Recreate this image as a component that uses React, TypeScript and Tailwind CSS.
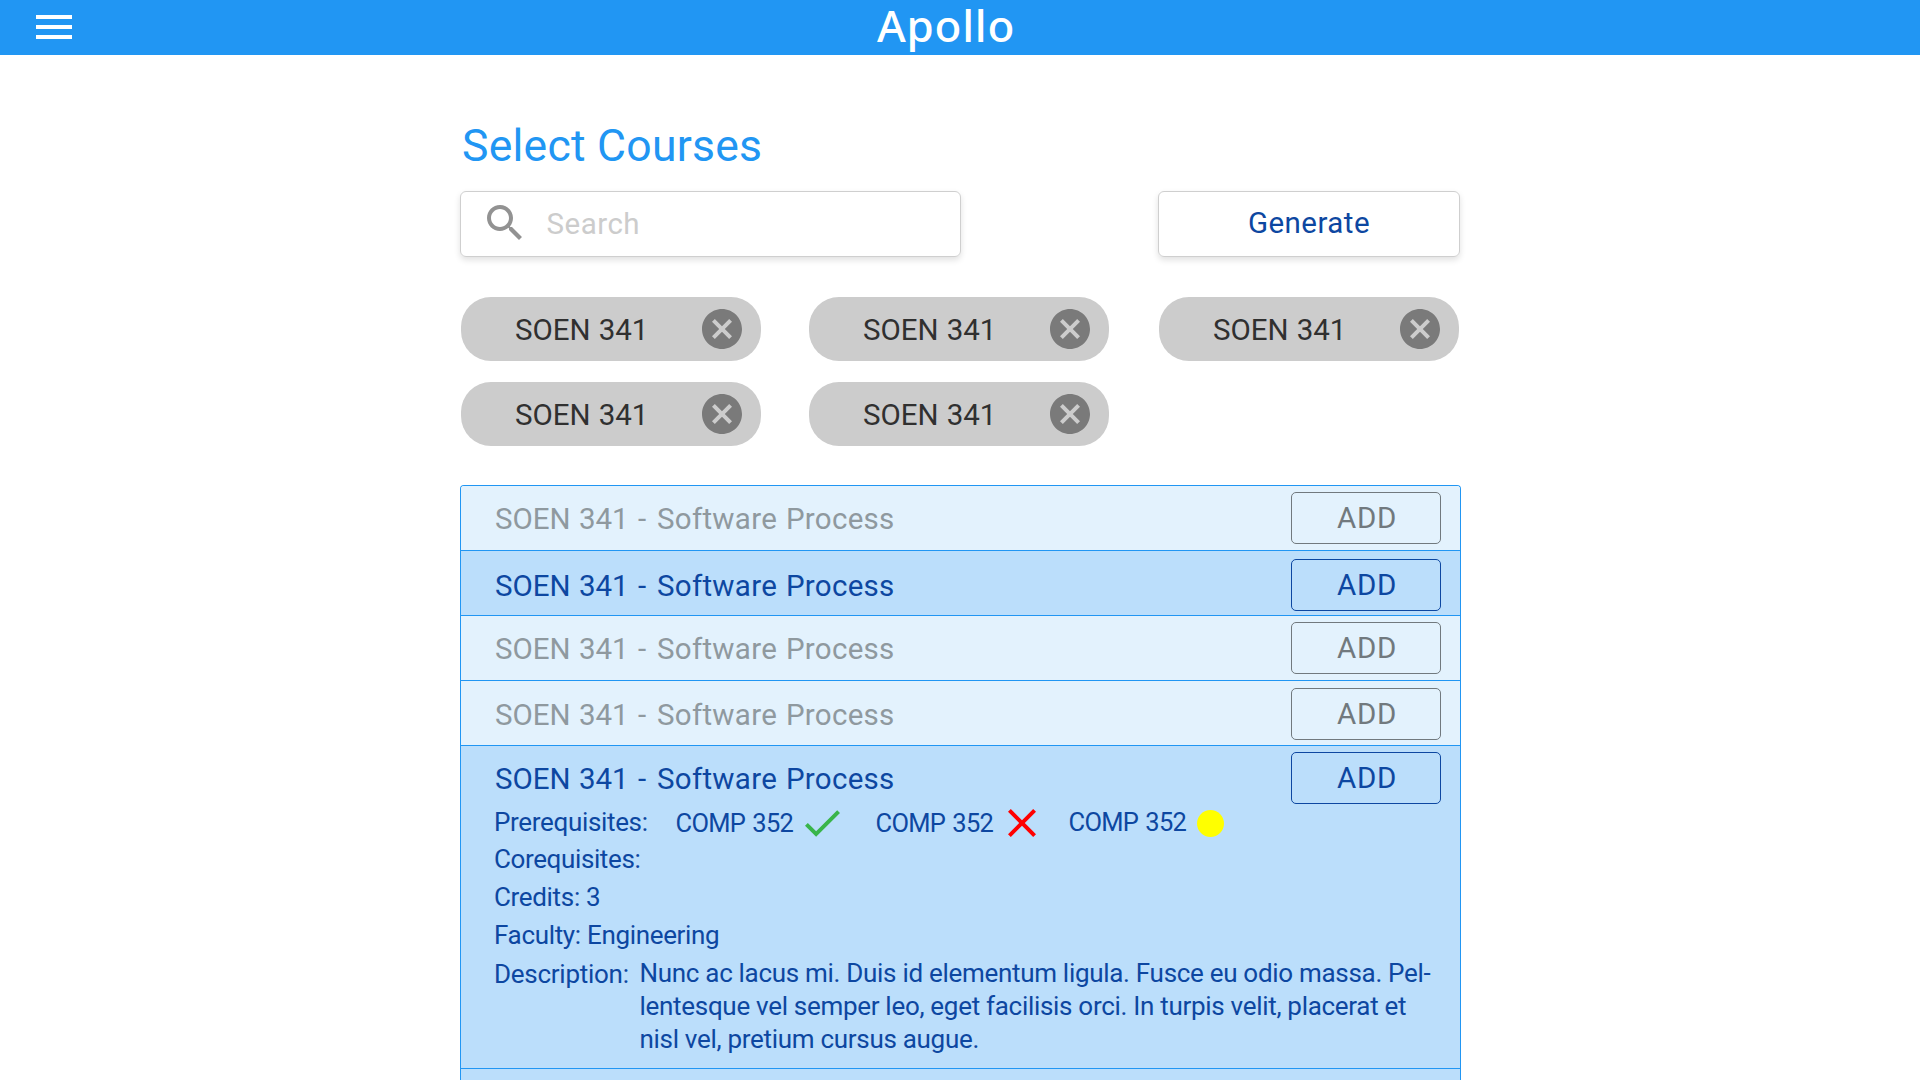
import type { ReactNode } from 'react';

function MenuIcon() {
  return (
    <svg viewBox="0 0 24 24" className="size-12 shrink-0 fill-white">
      <path d="M3 18h18v-2H3v2zm0-5h18v-2H3v2zm0-7v2h18V6H3z" />
    </svg>
  );
}

function SearchIcon() {
  return (
    <svg viewBox="0 0 24 24" className="size-12 shrink-0 fill-[#929292]">
      <path d="M15.5 14h-.79l-.28-.27C15.41 12.59 16 11.11 16 9.5 16 5.91 13.09 3 9.5 3S3 5.91 3 9.5 5.91 16 9.5 16c1.61 0 3.09-.59 4.23-1.57l.27.28v.79l5 4.99L20.49 19l-4.99-5zm-6 0C7.01 14 5 11.99 5 9.5S7.01 5 9.5 5 14 7.01 14 9.5 11.99 14 9.5 14z" />
    </svg>
  );
}

function CancelIcon() {
  return (
    <svg viewBox="2 2 20 20" className="size-10 fill-[#7a7a7a]">
      <path d="M12 2C6.47 2 2 6.47 2 12s4.47 10 10 10 10-4.47 10-10S17.53 2 12 2zm5 13.59L15.59 17 12 13.41 8.41 17 7 15.59 10.59 12 7 8.41 8.41 7 12 10.59 15.59 7 17 8.41 13.41 12 17 15.59z" />
    </svg>
  );
}

function CheckIcon() {
  return (
    <svg viewBox="3.41 5.59 17.59 13.41" className="mt-1.5 h-[27px] w-[35px] fill-[#39b54a]">
      <path d="M9 16.17L4.83 12l-1.42 1.41L9 19 21 7l-1.41-1.41z" />
    </svg>
  );
}

function CrossIcon() {
  return (
    <svg viewBox="5 5 14 14" className="mt-[5px] size-7 fill-[#ff0000]">
      <path d="M19 6.41L17.59 5 12 10.59 6.41 5 5 6.41 10.59 12 5 17.59 6.41 19 12 13.41 17.59 19 19 17.59 13.41 12z" />
    </svg>
  );
}

function Chip() {
  return (
    <div className="flex h-16 w-[300px] items-center justify-between rounded-[30px] bg-[#cccccc] pr-[19px] pl-[54px] text-[29.5px] tracking-[-0.05px] text-[#303030] [word-spacing:1px]">
      <span className="pt-0.5 leading-[66px]">SOEN 341</span>
      <CancelIcon />
    </div>
  );
}

function CourseRow({ active = false, className, children }: { active?: boolean; className: string; children?: ReactNode }) {
  return (
    <div className={`border-b border-[#2196f3] ${active ? 'bg-[#bbdefb]' : 'bg-[#e3f2fd]'} ${className}`}>
      <div className="flex h-[52px] items-start justify-between pr-[19px] pl-[34px]">
        <span
          className={`text-[29.5px] leading-[54px] tracking-[0.28px] whitespace-nowrap [word-spacing:1.3px] ${
            active ? 'text-[#0d47a1]' : 'text-[#8f999f]'
          }`}
        >
          <span className="tracking-[-0.05px]">SOEN 341</span> <span className="ml-[0.5px] mr-[1.7px]">-</span> Software Process
        </span>
        <button
          className={`h-[52px] w-[150px] rounded-[5px] border pl-0.5 text-[29.5px] leading-[50px] tracking-[0.6px] ${
            active ? 'border-[#0d47a1] text-[#0d47a1]' : 'border-[#71797e] text-[#71797e]'
          }`}
        >
          ADD
        </button>
      </div>
      {children}
    </div>
  );
}

function CourseDetails() {
  return (
    <div className="pl-[33px] text-[26px] tracking-[-0.33px] whitespace-nowrap text-[#0d47a1]">
      <div className="flex h-[37px] items-start leading-[37px]">
        <span className="w-[181.5px]">Prerequisites:</span>
        <div className="flex w-[200px] text-[25.5px] tracking-[-0.7px] [word-spacing:1.5px]">
          <span className="mt-px w-[129.5px]">COMP 352</span>
          <CheckIcon />
        </div>
        <div className="flex w-[193px] text-[25.5px] tracking-[-0.7px] [word-spacing:1.5px]">
          <span className="mt-px w-[132.5px]">COMP 352</span>
          <CrossIcon />
        </div>
        <div className="flex text-[25.5px] tracking-[-0.7px] [word-spacing:1.5px]">
          <span className="w-[128.5px]">COMP 352</span>
          <span className="mt-[5.5px] size-[27px] rounded-full bg-[#ffff00]" />
        </div>
      </div>
      <p className="leading-[37px] tracking-[-0.38px]">Corequisites:</p>
      <p className="leading-[38px]">Credits: 3</p>
      <p className="leading-[38px]">Faculty: Engineering</p>
      <div className="flex items-start">
        <span className="w-[145.5px] leading-10 tracking-[-0.27px]">Description:</span>
        <p className="pt-[3px] leading-[33px] tracking-[-0.3px]">
          Nunc ac lacus mi. Duis id elementum ligula. Fusce eu odio massa. Pel-
          <br />
          lentesque vel semper leo, eget facilisis orci. In turpis velit, placerat et
          <br />
          nisl vel, pretium cursus augue.
        </p>
      </div>
    </div>
  );
}

export default function App() {
  return (
    <div className="flex h-[1080px] w-[1920px] flex-col overflow-hidden bg-white font-['Roboto',sans-serif]">
      <header className="flex h-[55px] shrink-0 items-start bg-[#2196f3] pl-[30px]">
        <div className="pt-[3px]">
          <MenuIcon />
        </div>
        <span className="ml-[799px] font-['Noto_Sans',sans-serif] text-[44px] leading-[50px] font-medium tracking-[0.75px] text-white">
          Apollo
        </span>
      </header>

      <main className="ml-[460px] flex w-[1001px] flex-col">
        <h1 className="mt-[61px] pl-0.5 text-[44.5px] leading-[60px] tracking-[0.25px] text-[#2196f3]">Select Courses</h1>

        <div className="mt-[15px] flex justify-between pr-px">
          <div className="flex h-[66px] w-[501px] items-start rounded-[6px] border border-[#cfcfcf] pt-[7px] pl-5 shadow-[0_3px_6px_rgba(0,0,0,0.12)]">
            <SearchIcon />
            <span className="-mt-[7px] ml-[17.5px] text-[29.5px] leading-[64px] tracking-[0.5px] text-[#cccccc]">Search</span>
          </div>
          <button className="h-[66px] w-[302px] rounded-[6px] border border-[#cfcfcf] pb-0.5 text-[29.5px] leading-[62px] tracking-[0.45px] text-[#0d47a1] shadow-[0_3px_6px_rgba(0,0,0,0.12)]">
            Generate
          </button>
        </div>

        <div className="mt-10 flex flex-wrap gap-y-[21px] pl-px">
          <div className="w-[348px]"><Chip /></div>
          <div className="w-[350px]"><Chip /></div>
          <div className="w-[300px]"><Chip /></div>
          <div className="w-[348px]"><Chip /></div>
          <div className="w-[350px]"><Chip /></div>
        </div>

        <section className="mt-[39px] overflow-hidden rounded-t-[4px] border border-b-0 border-[#2196f3]">
          <CourseRow className="h-[65px] pt-1.5" />
          <CourseRow active className="h-[65px] pt-2" />
          <CourseRow className="h-[65px] pt-1.5" />
          <CourseRow className="h-[65px] pt-[7px]" />
          <CourseRow active className="h-[323px] pt-1.5">
            <CourseDetails />
          </CourseRow>
          <div className="h-20 bg-[#bbdefb]" />
        </section>
      </main>
    </div>
  );
}
